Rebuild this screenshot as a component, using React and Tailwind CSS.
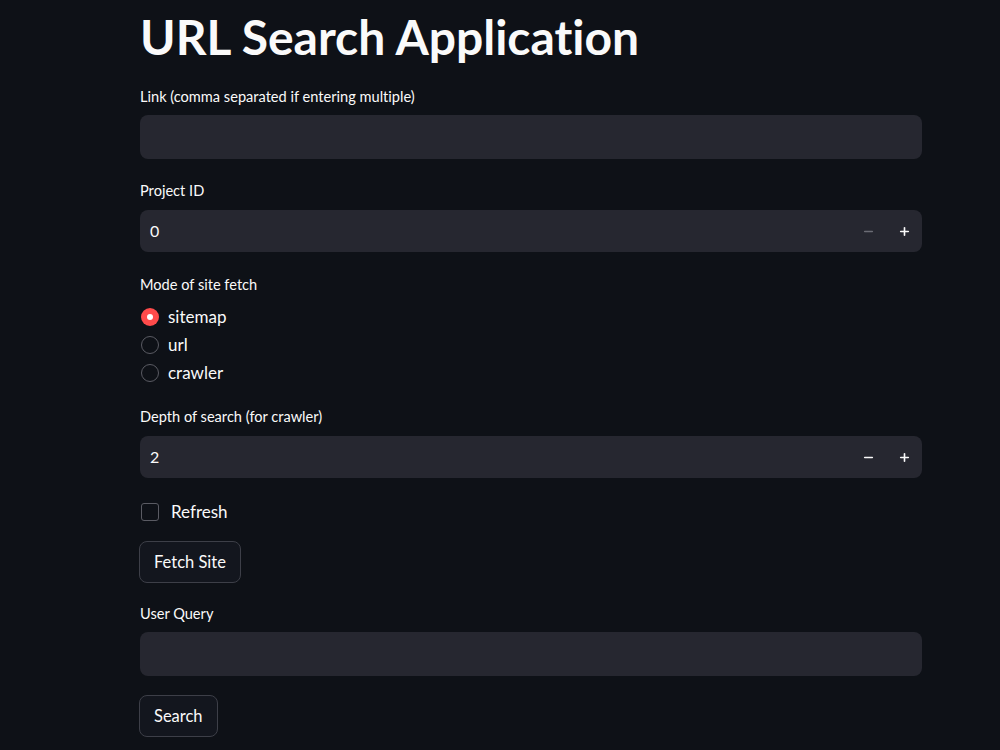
import { Minus, Plus } from 'lucide-react';

const Label = ({ children, className = '' }) => (
  <div className={`text-[14.6px] leading-[20px] text-[#fafafa] ${className}`}>{children}</div>
);

const TextBox = ({ className = '' }) => (
  <div className={`h-[44px] w-full rounded-lg bg-[#262730] ${className}`}></div>
);

const NumberBox = ({ value, minusDisabled }) => (
  <div className="h-[42px] w-full rounded-lg bg-[#262730] flex items-center pl-[10px]">
    <span className="flex-1 text-[16px] text-[#fafafa]">{value}</span>
    <button className={`w-[36px] h-full flex items-center justify-center ${minusDisabled ? 'text-[#6b6c75]' : 'text-[#fafafa]'}`}>
      <Minus size={13} strokeWidth={3} />
    </button>
    <button className="w-[36px] h-full flex items-center justify-center text-[#fafafa]">
      <Plus size={13} strokeWidth={3} />
    </button>
  </div>
);

const Radio = ({ label, checked }) => (
  <div className="flex items-center h-[28px]">
    {checked ? (
      <span className="w-[18px] h-[18px] rounded-full bg-[#ff4b4b] flex items-center justify-center ml-[1px]">
        <span className="w-[6px] h-[6px] rounded-full bg-white"></span>
      </span>
    ) : (
      <span className="w-[18px] h-[18px] rounded-full border border-[#5a5b63] bg-[#0e1117] ml-[1px]"></span>
    )}
    <span className="ml-[9px] text-[17px] text-[#fafafa]">{label}</span>
  </div>
);

const Btn = ({ children }) => (
  <button className="h-[42px] px-[14px] rounded-lg border border-[#3d3f48] bg-[#13161e] text-[16.5px] text-[#fafafa]">
    {children}
  </button>
);

export default function App() {
  return (
    <div className="min-h-[750px] bg-[#0e1117] overflow-hidden [font-variant-ligatures:none]" style={{ fontFamily: 'Lato, "Noto Sans", sans-serif' }}>
      <div className="ml-[140px] w-[782px]">
        <h1 className="text-[48px] font-bold leading-[56px] text-[#fafafa] mt-[9px]">URL Search Application</h1>

        <Label className="mt-[22px]">Link (comma separated if entering multiple)</Label>
        <TextBox className="mt-[8px]" />

        <Label className="mt-[22px]">Project ID</Label>
        <div className="mt-[9px]"><NumberBox value="0" minusDisabled /></div>

        <Label className="mt-[23px]">Mode of site fetch</Label>
        <div className="mt-[8px]">
          <Radio label="sitemap" checked />
          <Radio label="url" />
          <Radio label="crawler" />
        </div>

        <Label className="mt-[20px]">Depth of search (for crawler)</Label>
        <div className="mt-[9px]"><NumberBox value="2" /></div>

        <div className="flex items-center mt-[23px] h-[22px]">
          <span className="w-[18px] h-[18px] rounded-[3px] border border-[#5a5b63] ml-[1px]"></span>
          <span className="ml-[12px] text-[17px] text-[#fafafa]">Refresh</span>
        </div>

        <div className="mt-[18px] -ml-[1px]"><Btn>Fetch Site</Btn></div>

        <Label className="mt-[21px]">User Query</Label>
        <TextBox className="mt-[8px]" />

        <div className="mt-[19px] -ml-[1px]"><Btn>Search</Btn></div>
      </div>
    </div>
  );
}
